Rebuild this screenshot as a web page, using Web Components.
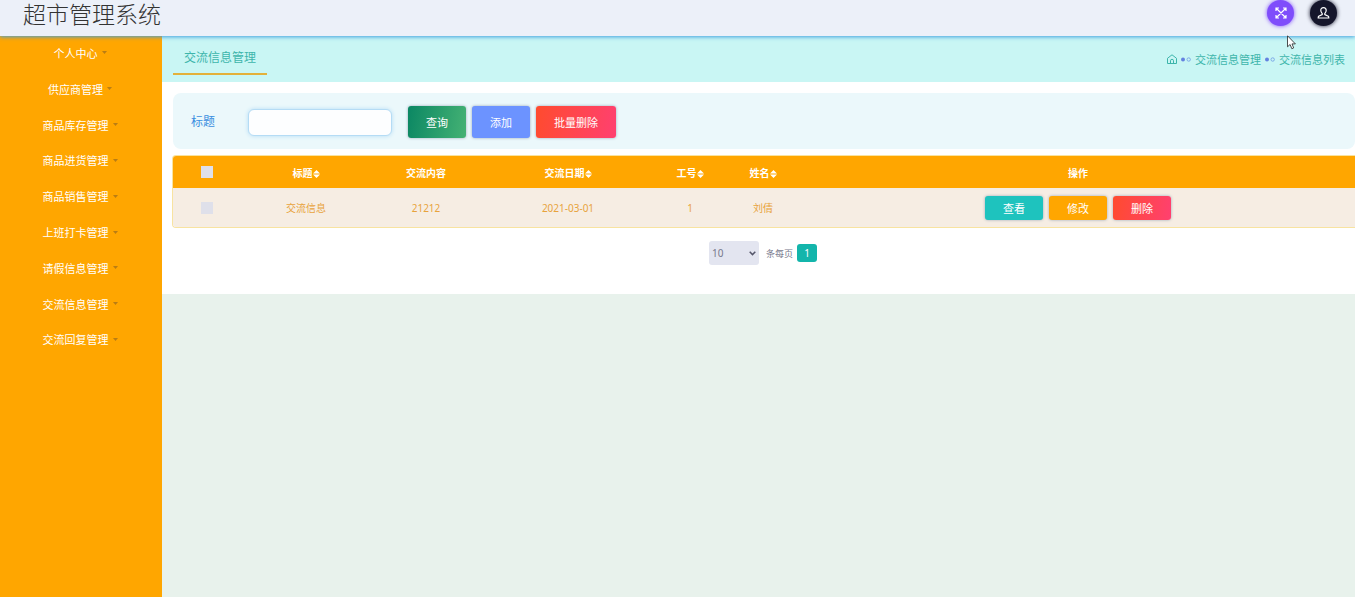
<!DOCTYPE html>
<html lang="zh-CN">
<head>
<meta charset="utf-8">
<meta name="viewport" content="width=device-width, initial-scale=1">
<title>超市管理系统</title>
<style>
    body {
        margin: 0;
        min-height: 100vh;
        background: #e8f2ec;
        font-family: "Noto Sans", "Noto Sans CJK SC", sans-serif;
        font-size: 10px;
    }
</style>
</head>
<body>
<admin-page>
    <admin-header slot="header" heading="超市管理系统"></admin-header>
    <side-menu slot="menu">
        <menu-item>个人中心</menu-item>
        <menu-item>供应商管理</menu-item>
        <menu-item>商品库存管理</menu-item>
        <menu-item>商品进货管理</menu-item>
        <menu-item>商品销售管理</menu-item>
        <menu-item>上班打卡管理</menu-item>
        <menu-item>请假信息管理</menu-item>
        <menu-item>交流信息管理</menu-item>
        <menu-item>交流回复管理</menu-item>
    </side-menu>
    <crumb-bar heading="交流信息管理" page="交流信息列表"></crumb-bar>
    <search-panel></search-panel>
    <message-table></message-table>
    <page-nav></page-nav>
</admin-page>

<script>
class BaseElement extends HTMLElement {
    constructor() {
        super();
        const template = document.createElement("template");
        template.innerHTML = this.constructor.markup;
        this.attachShadow({ mode: "open" }).append(template.content.cloneNode(true));
    }

    // copy attributes into the elements marked with data-text
    connectedCallback() {
        this.shadowRoot.querySelectorAll("[data-text]").forEach(el => {
            el.textContent = this.getAttribute(el.dataset.text);
        });
    }
}


class AdminPage extends BaseElement {
    static markup = `
<style>
    :host {
        display: flex;
        flex-direction: column;
        min-height: 100vh;
    }

    .body {
        display: flex;
        flex: 1;
    }

    main {
        flex: 1;
        min-width: 0;
    }

    .content {
        background: #fff;
        padding-bottom: 29px;
    }
</style>

<slot name="header"></slot>
<div class="body">
    <slot name="menu"></slot>
    <main><div class="content"><slot></slot></div></main>
</div>
`;
}


class AdminHeader extends BaseElement {
    static markup = `
<style>
    :host {
        display: block;
        position: relative;
        z-index: 1;
        background: #ecf0f9;
        box-shadow: 0 1px 4px #3fa0e0;
    }

    header {
        display: flex;
        justify-content: space-between;
        align-items: flex-start;
        padding: 0 18px 7px 23px;
    }

    h1 {
        margin: 0;
        font-size: 23px;
        line-height: 29px;
        font-weight: 300;
        color: #333;
    }

    .tools {
        display: flex;
        gap: 16px;
    }

    .pointer {
        position: absolute;
        right: 59px;
        top: 35px;
    }
</style>

<header>
    <h1 data-text="heading"></h1>
    <div class="tools">
        <round-button label="全屏" style="--color: #7f4dfb">
            <svg width="12" height="12" viewBox="0 0 12 12" fill="none" stroke="#fff" stroke-width="1.2">
                <path d="M1 4V1h3M8 1h3v3M11 8v3H8M4 11H1V8M1 1l10 10M11 1L1 11"/>
            </svg>
        </round-button>
        <round-button label="用户" style="--color: #15162b">
            <svg width="13" height="12" viewBox="0 0 12 12" fill="none" stroke="#fff" stroke-width="1.2">
                <path d="M6 .7C4.200.7 3.300 1.800 3.300 3.300c0 1.500.5 2.500 1.400 3.200v1L1.200 9.200C.8 9.500.7 10 .7 11h10.600c0-1-.1-1.500-.5-1.800L7.300 7.500v-1c.9-.7 1.400-1.700 1.400-3.200C8.700 1.800 7.800.7 6 .7z"/>
            </svg>
        </round-button>
    </div>
</header>
<svg class="pointer" width="9" height="15" viewBox="0 0 9 15">
    <path d="M.5.8v11l2.600-2.300 1.700 4.200 1.900-.8L5 8.900h3.400z" fill="#fff" stroke="#222" stroke-width=".8"/>
</svg>
`;
}


class RoundButton extends BaseElement {
    static markup = `
<style>
    :host { display: block; }

    button {
        display: flex;
        justify-content: center;
        align-items: center;
        width: 27px;
        height: 26px;
        padding: 0;
        border: 0;
        border-radius: 50%;
        background: var(--color);
        box-shadow: 0 0 4px var(--color);
    }
</style>

<button type="button"><slot></slot></button>
`;

    connectedCallback() {
        this.shadowRoot.querySelector("button").setAttribute("aria-label", this.getAttribute("label"));
    }
}


class SideMenu extends BaseElement {
    static markup = `
<style>
    :host {
        display: block;
        flex: none;
        width: 162px;
        background: #ffa600;
    }

    nav {
        display: grid;
        grid-auto-rows: 1fr;
        min-height: 54vh;
    }
</style>

<nav><slot></slot></nav>
`;
}


class MenuItem extends BaseElement {
    static markup = `
<style>
    :host { display: grid; }

    button {
        display: flex;
        justify-content: center;
        align-items: center;
        gap: 4px;
        padding: 0 2px 2px 0;
        border: 0;
        background: none;
        color: #fff;
        font: inherit;
        font-size: 11px;
    }
</style>

<button type="button">
    <slot></slot>
    <svg width="5" height="3" viewBox="0 0 5 3"><path d="M0 0h5L2.500 3z" fill="#b97d14"/></svg>
</button>
`;
}


class CrumbBar extends BaseElement {
    static markup = `
<style>
    :host {
        display: flex;
        justify-content: space-between;
        align-items: stretch;
        padding: 0 10px 0 11px;
        background: #c9f6f4;
        color: #3db5ab;
    }

    h2 {
        margin: 0 0 7px;
        padding: 8px 11px 1px;
        border-bottom: 2px solid #e3b13a;
        font-size: 12px;
        line-height: 28px;
        font-weight: 400;
    }

    nav {
        display: flex;
        align-items: center;
        gap: 4px;
        font-size: 11px;
    }

    a {
        display: flex;
        color: inherit;
        text-decoration: none;
    }
</style>

<h2 data-text="heading"></h2>
<nav aria-label="breadcrumb">
    <a href="#" aria-label="首页">
        <svg width="10" height="10" viewBox="0 0 10 10" fill="none" stroke="currentColor">
            <path d="M.5 4.300L5 .8l4.500 3.500v5.200h-9zM3.500 9.500V6.800a1.500 1.500 0 0 1 3 0v2.700"/>
        </svg>
    </a>
    <svg width="10" height="5" viewBox="0 0 10 5">
        <circle cx="2" cy="2.500" r="2" fill="#6382e0"/>
        <circle cx="7.700" cy="2.500" r="1.700" fill="none" stroke="#6f9be6" stroke-width=".8"/>
    </svg>
    <a href="#" data-text="heading"></a>
    <svg width="10" height="5" viewBox="0 0 10 5">
        <circle cx="2" cy="2.500" r="2" fill="#6382e0"/>
        <circle cx="7.700" cy="2.500" r="1.700" fill="none" stroke="#6f9be6" stroke-width=".8"/>
    </svg>
    <a href="#" data-text="page"></a>
</nav>
`;
}


class ActionButton extends BaseElement {
    static markup = `
<style>
    :host {
        display: inline-block;
        --height: 32px;
    }

    button {
        display: block;
        height: var(--height);
        min-width: 58px;
        padding: 0 18px;
        border: 0;
        border-radius: 3px;
        background: var(--fill);
        box-shadow: 0 0 3px #9aa8b8;
        color: #fff;
        font: inherit;
        font-size: 11px;
        white-space: nowrap;
    }
</style>

<button type="button"><slot></slot></button>
`;
}


class SearchPanel extends BaseElement {
    static markup = `
<style>
    :host {
        display: block;
        padding: 11px 0 0 11px;
    }

    form {
        display: flex;
        align-items: center;
        gap: 6px;
        padding: 13px 18px 11px;
        border-radius: 8px;
        background: #ebf8fb;
    }

    label {
        width: 51px;
        font-size: 12px;
        line-height: 30px;
        color: #3a8ee0;
    }

    input {
        box-sizing: border-box;
        width: 144px;
        height: 27px;
        margin-right: 10px;
        border: 1px solid #b5dcf5;
        border-radius: 6px;
        background: #fdfeff;
        box-shadow: 0 0 4px #b5dcf5;
        font: inherit;
        outline: none;
    }
</style>

<form>
    <label for="title">标题</label>
    <input id="title" type="text">
    <action-button style="--fill: linear-gradient(100deg, #0b8763, #45b274)">查询</action-button>
    <action-button style="--fill: #6c93ff">添加</action-button>
    <action-button style="--fill: linear-gradient(100deg, #ff4b2e, #ff4070)">批量删除</action-button>
</form>
`;
}


class MessageTable extends BaseElement {
    static markup = `
<style>
    :host {
        display: block;
        margin: 6px 0 0 10px;
    }

    .frame {
        overflow: hidden;
        border: 1px solid #f8e3a0;
        border-right: 0;
        border-radius: 4px 0 0 4px;
    }

    table {
        width: 100%;
        table-layout: fixed;
        border-collapse: collapse;
        text-align: center;
    }

    th, td { padding: 0; }

    th {
        height: 32px;
        background: #ffa600;
        color: #fff;
        font-weight: 700;
    }

    td {
        height: 39px;
        background: #f6ede3;
        color: #e8a33c;
    }

    .check { width: 68px; }
    .title { width: 130px; }
    .text { width: 110px; }
    .date { width: 174px; }
    .no { width: 70px; }
    .name { width: 76px; }

    .actions {
        display: flex;
        justify-content: center;
        gap: 6px;
    }

    .actions action-button { --height: 24px; }

    input {
        appearance: none;
        display: block;
        width: 12px;
        height: 12px;
        margin: 0 auto;
        background: #dfe0ea;
    }
</style>

<div class="frame">
    <table>
        <thead>
            <tr>
                <th class="check"><input type="checkbox" aria-label="全选"></th>
                <th class="title">标题<sort-icon></sort-icon></th>
                <th class="text">交流内容</th>
                <th class="date">交流日期<sort-icon></sort-icon></th>
                <th class="no">工号<sort-icon></sort-icon></th>
                <th class="name">姓名<sort-icon></sort-icon></th>
                <th>操作</th>
            </tr>
        </thead>
        <tbody>
            <tr>
                <td><input type="checkbox" aria-label="选择"></td>
                <td>交流信息</td>
                <td>21212</td>
                <td>2021-03-01</td>
                <td>1</td>
                <td>刘倩</td>
                <td>
                    <div class="actions">
                        <action-button style="--fill: #1ec3be">查看</action-button>
                        <action-button style="--fill: #ffa600">修改</action-button>
                        <action-button style="--fill: linear-gradient(100deg, #ff4b2e, #ff4070)">删除</action-button>
                    </div>
                </td>
            </tr>
        </tbody>
    </table>
</div>
`;
}


class SortIcon extends BaseElement {
    static markup = `
<style>
    :host {
        display: inline-block;
        vertical-align: middle;
    }

    svg { display: block; }
</style>

<svg width="7" height="8" viewBox="0 0 7 8" fill="#fff"><path d="M0 3.500L3.500 0 7 3.500zM0 4.500h7L3.500 8z"/></svg>
`;
}


class PageNav extends BaseElement {
    static markup = `
<style>
    :host {
        display: flex;
        justify-content: center;
        align-items: center;
        margin: 13px 0 0 9px;
        color: #77788c;
    }

    label {
        display: flex;
        align-items: center;
        gap: 7px;
        margin-right: 4px;
        font-size: 9px;
    }

    .select {
        display: grid;
        align-items: center;
    }

    .select > * { grid-area: 1 / 1; }

    .select svg {
        justify-self: end;
        margin-right: 3px;
        pointer-events: none;
    }

    select {
        appearance: none;
        width: 50px;
        height: 24px;
        padding: 0 3px;
        border: 0;
        border-radius: 3px;
        background: #e3e5f0;
        color: inherit;
        font: inherit;
        font-size: 10px;
    }

    button {
        width: 20px;
        height: 18px;
        padding: 0;
        border: 0;
        border-radius: 3px;
        background: #13b5ab;
        color: #fff;
        font: inherit;
    }
</style>

<label>
    <span class="select">
        <select><option>10</option></select>
        <svg width="7" height="5" viewBox="0 0 7 5" fill="none" stroke="#55566a" stroke-width="1.500"><path d="M.7.8l2.800 2.800L6.300.8"/></svg>
    </span>
    条每页
</label>
<button type="button">1</button>
`;
}


customElements.define("sort-icon", SortIcon);
customElements.define("action-button", ActionButton);
customElements.define("round-button", RoundButton);
customElements.define("menu-item", MenuItem);
customElements.define("side-menu", SideMenu);
customElements.define("admin-header", AdminHeader);
customElements.define("crumb-bar", CrumbBar);
customElements.define("search-panel", SearchPanel);
customElements.define("message-table", MessageTable);
customElements.define("page-nav", PageNav);
customElements.define("admin-page", AdminPage);
</script>
</body>
</html>
